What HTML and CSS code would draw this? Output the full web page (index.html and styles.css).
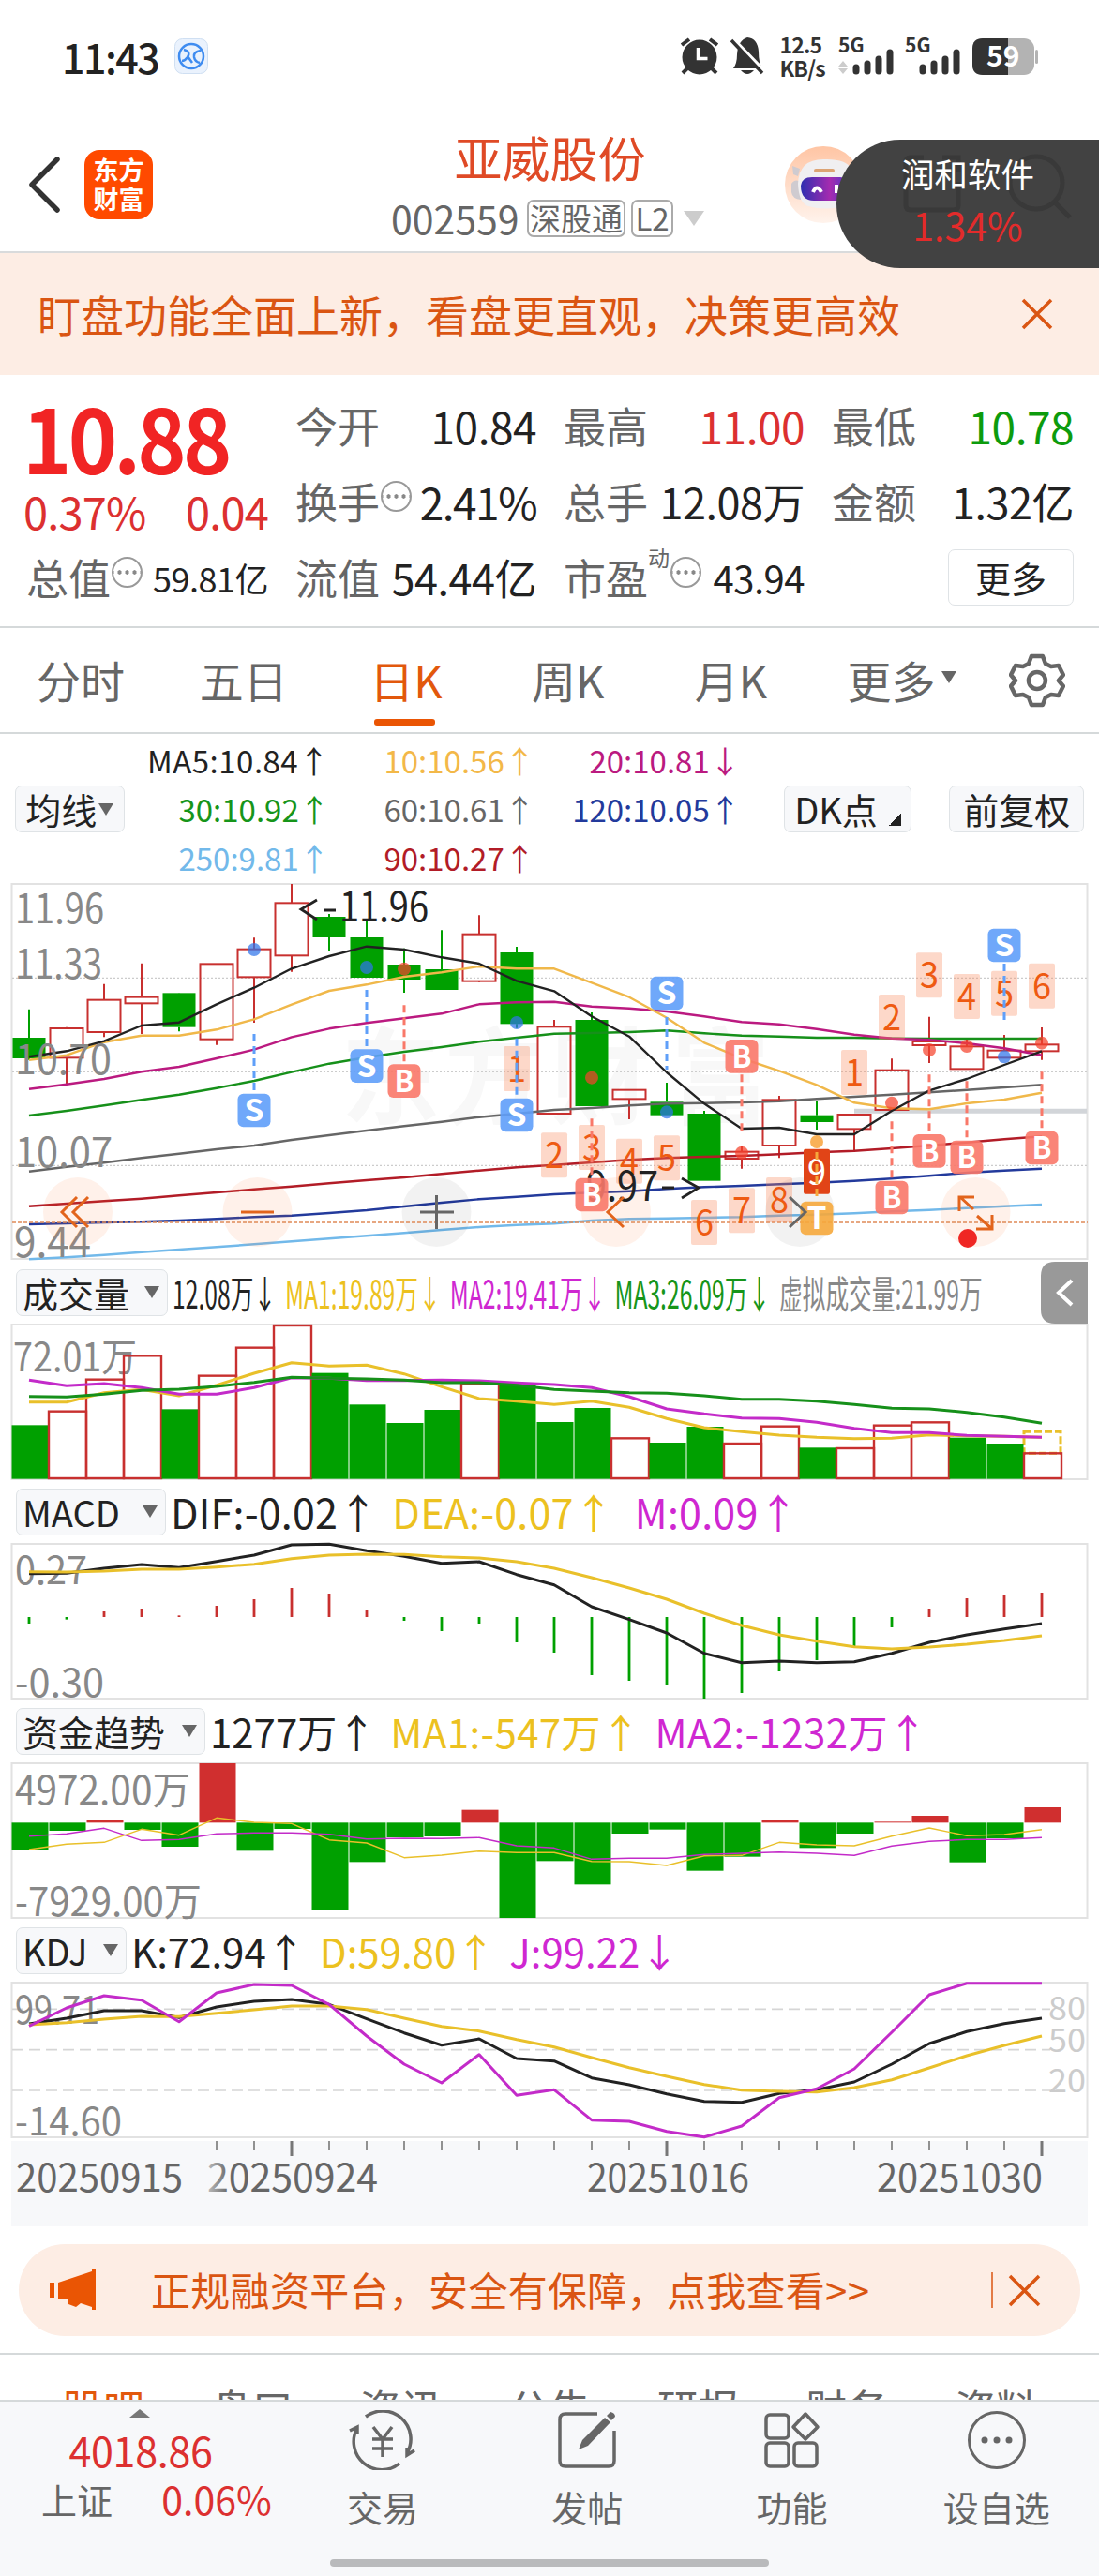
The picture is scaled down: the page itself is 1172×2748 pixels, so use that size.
FILE: index.html
```html
<!DOCTYPE html>
<html lang="zh-CN">
<head>
  <meta charset="UTF-8" />
  <meta name="viewport" content="width=device-width, initial-scale=1.0"/>
  <title>亚威股份 002559</title>
  <link rel="stylesheet" href="styles.css">
</head>
<body>
  <div class="status">
    <span class="clock">11:43</span>
    <svg class="app" width="36" height="38" viewBox="0 0 36 38"><rect x=".5" y=".5" width="35" height="37" rx="8" fill="#eaf2fd" stroke="#cfdff2"/><circle cx="18" cy="19" r="13" fill="none" stroke="#3f8cf0" stroke-width="2.5"/><path d="M10 12q8 2 4 8-3 4-6 4M28 13q-8 1-7 7 1 5 6 6M14 19l5 7" fill="none" stroke="#3f8cf0" stroke-width="2.5"/></svg>
    <svg class="alarm" width="42" height="40" viewBox="0 0 42 40"><circle cx="21" cy="21" r="18.500" fill="#333"/><path d="M19.500 11v11.500h10" fill="none" stroke="#fff" stroke-width="3.5"/><path d="M2 8l8-6M40 8l-8-6M8 33l-5 5M34 33l5 5" stroke="#333" stroke-width="4"/></svg>
    <svg class="bell" width="36" height="40" viewBox="0 0 36 40"><path d="M3 33q4-5 4-15Q8 3 18 0q11 1 12 15 0 12 4 18zM11 35h14q-7 8-14 0z" fill="#333"/><path d="M4 3l33 34" stroke="#fff" stroke-width="4"/><path d="M1 3l33 35" stroke="#333" stroke-width="3.5"/></svg>
    <span class="speed">12.5<br>KB/s</span>
    <svg class="signal" width="60" height="40" viewBox="0 0 60 40"><text x="0" y="16" class="g5">5G</text><path d="M0 31l5-6 5 6zM0 33l5 6 5-6z" fill="#ccc"/><path d="M19 32v4M31 28v8M43 23v13M55 16v20" stroke="#333" stroke-width="7" stroke-linecap="round"/></svg>
    <svg class="signal" width="60" height="40" viewBox="0 0 60 40"><text x="0" y="16" class="g5">5G</text><path d="M19 32v4M31 28v8M43 23v13M55 16v20" stroke="#333" stroke-width="7" stroke-linecap="round"/></svg>
    <svg class="battery" width="70" height="39" viewBox="0 0 70 39"><rect width="66" height="39" rx="11" fill="#b3b3b3"/><path d="M38 0H11Q0 0 0 11v17q0 11 11 11h27z" fill="#333"/><rect x="67" y="12" width="3" height="15" rx="1.5" fill="#b3b3b3"/><text x="15" y="30">59</text></svg>
  </div>

  <header class="header">
    <svg class="back" width="34" height="60" viewBox="0 0 34 60"><path d="M31 3L4 30l27 27" fill="none" stroke="#333" stroke-width="5.5" stroke-linecap="round" stroke-linejoin="round"/></svg>
    <div class="brand">东方<br>财富</div>
    <div class="stock">
      <h1>亚威股份</h1>
      <div class="code"><span>002559</span><i>深股通</i><i class="l2">L2</i><b class="down"></b></div>
    </div>
    <svg class="robot" width="84" height="84" viewBox="0 0 84 84">
      <defs>
        <linearGradient id="halo" x1="0" y1="0" x2="0" y2="1"><stop offset="0" stop-color="#ffc5a4"/><stop offset="1" stop-color="#fff3ec"/></linearGradient>
        <linearGradient id="face"><stop offset="0" stop-color="#2e2fb0"/><stop offset=".6" stop-color="#a52bb0"/><stop offset="1" stop-color="#4a37c8"/></linearGradient>
      </defs>
      <circle cx="42" cy="41" r="41" fill="url(#halo)"/>
      <path d="M9 21l8 3-2 8-5-2zM8 40q3-5 8-3l2 20q-9-1-10-8z" fill="#cfcbd0"/>
      <path d="M15 40q1-26 27-26 24-1 30 10v38q-26 8-46 2-10-3-11-24z" fill="#f0eff1"/>
      <path d="M18 42q1-9 12-9h30q10 0 10 10v15H32Q18 58 18 42z" fill="url(#face)"/>
      <path d="M31 49q4-9 9 0M56 41v9" fill="none" stroke="#fff" stroke-width="4"/>
      <path d="M34 26h18" stroke="#dca373" stroke-width="4" stroke-linecap="round"/>
    </svg>
    <div class="float">
      <svg width="190" height="80" viewBox="0 0 190 80"><g fill="none" stroke="#393939" stroke-width="5"><path d="M24 4H10Q5 4 5 9v46q0 5 5 5h46q5 0 5-5V30M44 4h17v16"/><circle cx="144" cy="31" r="28"/><path d="M164 52l16 16"/></g></svg>
      <span>润和软件</span>
      <strong>1.34%</strong>
    </div>
  </header>

  <div class="notice">
    <span>盯盘功能全面上新，看盘更直观，决策更高效</span>
    <svg width="34" height="34" viewBox="0 0 34 34"><path d="M2 2l30 30M32 2L2 32" stroke="#da5512" stroke-width="3.5"/></svg>
  </div>

  <section class="quote">
    <div class="now">
      <div class="price">10.88</div>
      <div class="change"><span>0.37%</span><span>0.04</span></div>
    </div>
    <div class="cell"><label>今开</label><span>10.84</span></div>
    <div class="cell"><label>最高</label><span class="up">11.00</span></div>
    <div class="cell"><label>最低</label><span class="green">10.78</span></div>
    <div class="cell"><label>换手<i class="dots"></i></label><span class="rate">2.41%</span></div>
    <div class="cell"><label>总手</label><span class="tight">12.08万</span></div>
    <div class="cell"><label>金额</label><span class="tight">1.32亿</span></div>
    <div class="cell"><label>总值<i class="dots"></i></label><span class="small">59.81亿</span></div>
    <div class="cell"><label>流值</label><span class="tight">54.44亿</span></div>
    <div class="cell"><label>市盈<sup>动</sup><i class="dots"></i></label><span class="pe">43.94</span></div>
    <div class="cell end"><button>更多</button></div>
  </section>

  <nav class="tabs">
    <span>分时</span>
    <span>五日</span>
    <span class="active">日K</span>
    <span>周K</span>
    <span>月K</span>
    <span class="more">更多<b class="down dark"></b></span>
    <svg width="60" height="60" viewBox="0 0 60 60"><g fill="none" stroke="#666" stroke-width="4.5" stroke-linejoin="round"><path d="M24 4h12l3 8 6 3 8-1 5 10-5 6 5 6-5 10-8-1-6 3-3 8H24l-3-8-6-3-8 1-5-10 5-6-5-6 5-10 8 1 6-3z"/><circle cx="30" cy="30" r="9"/></g></svg>
  </nav>

  <div class="ma">
    <button class="pick">均线<b class="down dark"></b></button>
    <div class="ma-list">
      <span class="c5">MA5:10.84↑</span><span class="c10">10:10.56↑</span><span class="c20">20:10.81↓</span>
      <span class="c30">30:10.92↑</span><span class="c60">60:10.61↑</span><span class="c120">120:10.05↑</span>
      <span class="c250">250:9.81↑</span><span class="c90">90:10.27↑</span>
    </div>
    <button class="dk">DK点<b class="corner"></b></button>
    <button class="fq">前复权</button>
  </div>
  <svg class="chart" id="kline" width="1172" height="401"></svg>

  <div class="legend vol">
    <button>成交量<b class="down dark"></b></button>
    <div class="narrow"><span>12.08万↓</span><span class="y">MA1:19.89万↓</span><span class="m">MA2:19.41万↓</span><span class="g">MA3:26.09万↓</span><span class="n">虚拟成交量:21.99万</span></div>
    <svg class="fold" width="50" height="66" viewBox="0 0 50 66"><path d="M50 0H15Q0 0 0 15v36q0 15 15 15h35z" fill="#999"/><path d="M33 20L19 33l14 13" fill="none" stroke="#fff" stroke-width="4"/></svg>
  </div>
  <svg class="chart" id="volume" width="1172" height="165"></svg>

  <div class="legend macd">
    <button>MACD<b class="down dark"></b></button>
    <span>DIF:-0.02↑</span><span class="y">DEA:-0.07↑</span><span class="m">M:0.09↑</span>
  </div>
  <svg class="chart" id="macd" width="1172" height="165"></svg>

  <div class="legend fund">
    <button>资金趋势<b class="down dark"></b></button>
    <span class="main">1277万↑</span><span class="y">MA1:-547万↑</span><span class="m">MA2:-1232万↑</span>
  </div>
  <svg class="chart" id="fund" width="1172" height="165"></svg>

  <div class="legend kdj">
    <button>KDJ<b class="down dark"></b></button>
    <span>K:72.94↑</span><span class="y">D:59.80↑</span><span class="m">J:99.22↓</span>
  </div>
  <svg class="chart" id="kdj" width="1172" height="165"></svg>
  <svg class="axis" id="axis" width="1148" height="91"></svg>

  <div class="promo">
    <svg width="50" height="44" viewBox="0 0 50 44"><path d="M0 14h5v16H0zM9 14L45 2V0h4v43h-4v-3l-12-4-5 4-8-3v-5H9z" fill="#ea5504"/></svg>
    <span>正规融资平台，安全有保障，点我查看&gt;&gt;</span>
    <svg class="close" width="54" height="38" viewBox="0 0 54 38"><path d="M1 0v38" stroke="#da5512" stroke-width="1.5"/><path d="M20 4l31 31M51 4L20 35" stroke="#da5512" stroke-width="3.5"/></svg>
  </div>

  <nav class="subtabs">
    <span class="active">股吧</span><span>盘口</span><span>资讯</span><span>公告</span><span>研报</span><span>财务</span><span>资料</span>
  </nav>

  <footer class="bottom">
    <div class="index">
      <b class="upmark"></b>
      <strong>4018.86</strong>
      <div><span>上证</span><em>0.06%</em></div>
    </div>
    <div class="action">
      <svg width="72" height="64" viewBox="0 0 72 64"><g fill="none" stroke="#666" stroke-width="3.5"><path d="M18 7A30 30 0 0 1 62 46M54 57A30 30 0 0 1 9 19M1 22l8-4v7M70 43l-8 5v-8M26 18l10 13 10-13M25 31h22M25 41h22M36 31v19"/></g></svg>
      <span>交易</span>
    </div>
    <div class="action">
      <svg width="64" height="64" viewBox="0 0 64 64"><path d="M43 4H9Q3 4 3 10v44q0 6 6 6h46q6 0 6-6V22" fill="none" stroke="#666" stroke-width="3.5"/><path d="M23 42l4-10L51 8l6 5-24 25zM53 6l4-4q5 1 5 5l-4 4z" fill="#666"/></svg>
      <span>发帖</span>
    </div>
    <div class="action">
      <svg width="62" height="64" viewBox="0 0 62 64"><g fill="none" stroke="#666" stroke-width="3.5"><rect x="3" y="5" width="24" height="25" rx="4"/><rect x="3" y="35" width="24" height="25" rx="4"/><rect x="33" y="35" width="24" height="25" rx="4"/><path d="M45 4l13 14-13 13-13-13z" stroke-linejoin="round"/></g></svg>
      <span>功能</span>
    </div>
    <div class="action">
      <svg width="64" height="64" viewBox="0 0 64 64"><circle cx="32" cy="32" r="29.500" fill="none" stroke="#666" stroke-width="3"/><g fill="#666"><circle cx="19" cy="32" r="3.5"/><circle cx="32" cy="32" r="3.5"/><circle cx="45" cy="32" r="3.5"/></g></svg>
      <span>设自选</span>
    </div>
    <div class="home"></div>
  </footer>

  <script src="charts.js"></script>
</body>
</html>
```
FILE: styles.css
```css
* {
  box-sizing: border-box;
}
body {
  margin: 0;
  width: 1172px;
  height: 2748px;
  overflow: hidden;
  display: flex;
  flex-direction: column;
  background: #fff;
  color: #222;
  font-family: "Noto Sans CJK SC", sans-serif;
  line-height: 1;
}
body > * {
  flex: none;
}
i, em {
  font-style: normal;
}
button {
  font-family: inherit;
  line-height: 1;
  color: #222;
  background: #f7f8fa;
  border: 1.5px solid #dfe3e6;
  border-radius: 7px;
  padding: 0;
  display: flex;
  align-items: center;
  justify-content: center;
}
.down {
  border: 11px solid transparent;
  border-top: 16px solid #ccc;
  border-bottom: 0;
}
.down.dark {
  border-width: 13px 8px 0;
  border-top-color: #666;
}

/* status bar */
.status {
  height: 120px;
  padding: 0 65px 0 66px;
  display: flex;
  align-items: center;
}
.status svg {
  overflow: visible;
}
.clock {
  font-size: 43px;
  font-weight: 500;
  width: 123px;
  letter-spacing: -1.5px;
}
.alarm {
  margin-left: 503px;
}
.bell {
  margin-left: 12px;
}
.speed {
  width: 64px;
  margin-left: 16px;
  font-size: 23px;
  line-height: 25px;
  font-weight: 700;
  color: #333;
  letter-spacing: -0.8px;
}
.signal {
  margin-right: 11px;
}
.g5 {
  font-size: 21px;
  font-weight: 700;
  fill: #333;
}
.battery {
  margin-left: 1px;
}
.battery text {
  font-size: 30px;
  font-weight: 700;
  fill: #fff;
}

/* title bar */
.header {
  position: relative;
  height: 150px;
  border-bottom: 2px solid #d9dbdc;
  padding-left: 30px;
  display: flex;
}
.back {
  margin-top: 47px;
}
.brand {
  margin: 40px 0 0 26px;
  width: 73px;
  height: 74px;
  border-radius: 16px;
  background: #ff4a00;
  color: #fff;
  font-size: 27px;
  font-weight: 700;
  line-height: 31px;
  padding-top: 5px;
  text-align: center;
}
.stock {
  margin-left: 254px;
  width: 419px;
  padding-top: 22px;
}
h1 {
  margin: 0;
  width: 339px;
  text-align: center;
  font-size: 51px;
  font-weight: 400;
  color: #df4a26;
}
.code {
  display: flex;
  align-items: center;
  margin-top: 19px;
  color: #666;
  font-size: 41px;
}
.code span {
  width: 145px;
}
.code i {
  height: 40px;
  width: 105px;
  border: 2px solid #aaa;
  border-radius: 7px;
  font-size: 33px;
  line-height: 35px;
  text-align: center;
}
.code .l2 {
  width: 45px;
  margin: 0 11px 0 6px;
}
.robot {
  margin-top: 36px;
}
.float {
  position: absolute;
  right: 0;
  top: 29px;
  z-index: 2;
  width: 280px;
  height: 137px;
  background: #424242;
  border-radius: 68px 0 0 68px;
  text-align: center;
  color: #fff;
}
.float svg {
  position: absolute;
  left: 69px;
  top: 15px;
}
.float span, .float strong {
  position: relative;
  display: block;
  font-size: 35.5px;
  margin-top: 18px;
}
.float strong {
  font-size: 41px;
  font-weight: 400;
  color: #e32b2b;
  margin-top: 16px;
}

.notice {
  height: 130px;
  padding: 0 49px 0 40px;
  background: #fdede4;
  color: #da5512;
  font-size: 46px;
  display: flex;
  align-items: center;
  justify-content: space-between;
}
.notice span {
  margin-top: -3px;
}

/* quote */
.quote {
  height: 270px;
  padding: 13px 27px 0 28px;
  border-bottom: 2px solid #d5d9da;
  display: grid;
  grid-template-columns: 258px 257px 257px 258px;
  grid-auto-rows: 81px;
  column-gap: 29px;
}
.now {
  grid-row: span 2;
  color: #f12424;
}
.price {
  font-size: 94px;
  font-weight: 700;
  letter-spacing: -4px;
  margin: 5px 0 0 -4px;
  transform: scaleX(.945);
  transform-origin: left;
}
.change {
  display: flex;
  justify-content: space-between;
  font-size: 47px;
  letter-spacing: -0.8px;
  color: #dc3030;
  margin: 9px 0 0 -3px;
}
.cell {
  display: flex;
  align-items: center;
  justify-content: space-between;
  font-size: 46px;
}
.cell label {
  color: #666;
  font-size: 45px;
  display: flex;
  align-items: center;
}
.cell span {
  letter-spacing: -0.5px;
}
.cell .rate {
  letter-spacing: -1.5px;
}
.cell .tight {
  font-size: 45px;
  letter-spacing: -0.5px;
}
.cell .small {
  font-size: 36px;
}
.cell .pe {
  font-size: 40px;
}
.up {
  color: #dc3030;
}
.green {
  color: #0d9b0d;
}
.dots {
  width: 33px;
  height: 33px;
  margin: -10px 0 0 1px;
  border: 2.5px solid #999;
  border-radius: 50%;
  background: radial-gradient(circle, #888 2px, transparent 2.5px) center / 8px 100% repeat-x;
}
.cell sup {
  font-size: 23px;
  margin: -42px 0 0;
}
.end {
  justify-content: flex-end;
}
.end button {
  width: 134px;
  height: 60px;
  font-size: 38px;
  background: #fff;
}

/* period tabs */
.tabs {
  height: 113px;
  border-bottom: 2px solid #d5d9da;
  padding: 0 36px 0 39px;
  display: flex;
  align-items: center;
  color: #666;
  font-size: 47px;
}
.tabs span {
  height: 68px;
  width: 174px;
  display: flex;
  padding-top: 9px;
}
.tabs span:nth-child(2) {
  width: 182px;
}
.tabs span:nth-child(3) {
  width: 173px;
}
.tabs .active {
  position: relative;
  color: #e2580c;
}
.tabs .active::after {
  content: "";
  position: absolute;
  left: 5px;
  bottom: -14px;
  width: 65px;
  height: 7px;
  border-radius: 3px;
  background: #ea5504;
}
.tabs span:nth-child(5) {
  width: 163px;
}
.tabs .more {
  width: 173px;
}
.more .down {
  margin: 15px 0 0 7px;
}

/* moving averages */
.ma {
  height: 160px;
  padding: 0 16px;
  display: flex;
  align-items: center;
}
.ma button {
  height: 50px;
  font-size: 38px;
}
.ma .pick {
  width: 117px;
  gap: 2px;
}
.ma-list {
  width: 657px;
  margin-right: 46px;
  display: grid;
  grid-template-columns: repeat(3, 219px);
  grid-auto-rows: 52px;
  align-items: center;
  text-align: right;
  font-size: 33px;
}
.ma .dk {
  width: 137px;
  margin-right: 40px;
  gap: 12px;
}
.corner {
  width: 13px;
  height: 13px;
  margin-top: 22px;
  background: linear-gradient(135deg, transparent 50%, #222 50%);
}
.ma .fq {
  width: 144px;
}
.c5 { letter-spacing: 0.5px; }
.c10 { color: #f3b848; }
.c20 { color: #bb1a80; }
.c30 { color: #16951a; }
.c60 { color: #666; }
.c120 { color: #233a9c; }
.c250 { color: #72b9ea; }
.c90 { color: #b21c27; }

/* indicator headers */
.legend {
  height: 69px;
  padding-left: 17px;
  display: flex;
  align-items: center;
  font-size: 42px;
  white-space: nowrap;
}
.legend button {
  height: 50px;
  font-size: 38px;
  padding: 0 8px 0 6px;
  justify-content: space-between;
  margin-right: 5px;
  flex: none;
}
.legend span {
  margin-right: 15px;
}
.vol button { width: 162px; }
.macd button { width: 160px; }
.fund button { width: 202px; }
.kdj button { width: 118px; }
.macd span {
  font-size: 43px;
  letter-spacing: 0.2px;
}
.macd .y {
  margin-right: 22px;
}
.fund .m, .fund .y {
  letter-spacing: 0.4px;
}
.legend .narrow {
  width: 926px;
  font-size: 41px;
  transform: scaleX(.602);
  transform-origin: left;
}
.fold {
  position: absolute;
  left: 1110px;
}
.y { color: #ecc11f; }
.m { color: #cf27d1; }
.g { color: #16951a; }
.n { color: #888; }

.chart {
  display: block;
  overflow: visible;
}
.chart text {
  fill: #888;
}
.chart .note {
  fill: #222;
}
.chart .badge {
  fill: #fff;
  font-weight: 700;
}
.chart .count {
  fill: #ee5a12;
}
.chart .nine {
  fill: #fff;
}
.chart .level {
  fill: #ccc;
}
.chart .mark {
  fill: #f8f8f8;
  font-weight: 700;
}
.axis {
  display: block;
  margin: 4px 12px 0;
  background: #f7f8fa;
}
.axis text {
  fill: #666;
}

.promo {
  height: 98px;
  margin: 19px 20px 0;
  padding: 0 41px 0 33px;
  border-radius: 49px;
  background: #fdede4;
  color: #da5512;
  font-size: 42px;
  display: flex;
  align-items: center;
}
.promo span {
  margin: -3px 0 0 58px;
  letter-spacing: 0.3px;
}
.promo .close {
  margin-left: auto;
}

.subtabs {
  height: 50px;
  margin-top: 18px;
  padding: 34px 66px 0;
  border-top: 2px solid #d5d9da;
  display: flex;
  justify-content: space-between;
  overflow: hidden;
  font-size: 44px;
  color: #666;
}
.subtabs .active {
  color: #e2580c;
}

/* bottom bar */
.bottom {
  position: relative;
  height: 188px;
  background: #f7f8fa;
  border-top: 2px solid #d5d9da;
  padding-left: 30px;
  display: flex;
}
.index {
  width: 269px;
  color: #dc3030;
}
.upmark {
  display: block;
  width: 0;
  margin: 8px 0 0 108px;
  border: 11px solid transparent;
  border-top: 0;
  border-bottom: 9px solid #777;
}
.index strong {
  display: block;
  width: 240px;
  text-align: center;
  font-size: 43px;
  font-weight: 400;
  letter-spacing: -0.3px;
  margin: 13px 0 10px;
}
.index div {
  display: flex;
  justify-content: space-between;
  align-items: center;
  padding: 0 9px 0 14px;
  font-size: 41px;
}
.index div span {
  font-size: 38px;
  color: #666;
}
.action {
  width: 218.5px;
  padding-top: 9px;
  display: flex;
  flex-direction: column;
  align-items: center;
  color: #666;
  font-size: 38px;
}
.action span {
  margin-top: 20px;
}
.home {
  position: absolute;
  left: 352px;
  bottom: 10px;
  width: 468px;
  height: 8px;
  border-radius: 4px;
  background: #b9babc;
}
```
FILE: charts.js
```js
const RED = "#c8302f";
const GREEN = "#00a000";
const BLACK = "#222";
const YELLOW = "#e9c02a";
const PURPLE = "#c32bc9";

// one trading day every 40px
const cx = i => 31 + i * 40;

// values are in thirds of a pixel, counted from `top`
function makeChart(id, top) {
  const y = v => (v - top) / 3;
  let out = "";
  return {
    y,
    add(s) { out += s; },
    rect(x, a, w, b, attrs) {
      out += `<rect x="${x}" y="${y(a)}" width="${w}" height="${Math.max(y(b) - y(a), 1)}" ${attrs}/>`;
    },
    line(values, color, width) {
      const pts = values.map((v, i) => `${cx(i)},${y(v).toFixed(1)}`).join(" ");
      out += `<polyline points="${pts}" fill="none" stroke="${color}" stroke-width="${width}" stroke-linejoin="round"/>`;
    },
    text(s, x, base, size, width, cls) {
      out += `<text x="${x}" y="${base}" font-size="${size}" textLength="${width}" lengthAdjust="spacingAndGlyphs" class="${cls || ""}">${s}</text>`;
    },
    done() { document.getElementById(id).innerHTML = out; }
  };
}
const frame = h => `<rect x="12.5" y="0" width="1147" height="${h}" fill="none" stroke="#e2e2e2" stroke-width="2"/>`;

// ---- candles ----
const k = makeChart("kline", 42);
k.add(frame(400));
"东方财富".split("").forEach((c, i) => k.text(c, [364, 474, 588, 716][i], 248, 112, 105, "mark"));
[343, 643, 943].forEach(v => k.add(`<path d="M13 ${k.y(v)}H1159" stroke="#ccc" stroke-width="1.2" stroke-dasharray="2 2"/>`));
k.add(`<path d="M911 ${k.y(769)}H1159" stroke="#d2d5d9" stroke-width="5"/>`);

// high, top, bottom, low
const candles = [
  ["g", 443, 534, 600, 605], ["r", 500, 504, 598, 683], ["r", 362, 413, 516, 532], ["r", 296, 404, 424, 522],
  ["g", 390, 391, 500, 514], ["r", 298, 298, 539, 557], ["r", 214, 251, 340, 486], ["r", 42, 103, 271, 323],
  ["g", 138, 147, 213, 256], ["g", 155, 213, 342, 342], ["g", 248, 300, 348, 390], ["g", 190, 315, 381, 381],
  ["r", 142, 203, 353, 356], ["g", 243, 261, 490, 503], ["r", 477, 499, 777, 777], ["g", 453, 477, 753, 753],
  ["r", 700, 701, 730, 795], ["g", 678, 739, 782, 782], ["g", 768, 777, 992, 992], ["r", 880, 899, 921, 953],
  ["r", 720, 733, 879, 919], ["g", 738, 782, 804, 828], ["r", 778, 780, 826, 900], ["r", 601, 638, 765, 765],
  ["r", 467, 546, 558, 615], ["r", 540, 562, 634, 634], ["r", 525, 575, 598, 598], ["r", 501, 556, 577, 605]
];
candles.forEach(([c, hi, top, bot, lo], i) => {
  const color = c === "g" ? GREEN : RED;
  k.add(`<path d="M${cx(i)} ${k.y(hi)}V${k.y(top)}M${cx(i)} ${k.y(bot)}V${k.y(lo)}" stroke="${color}" stroke-width="2"/>`);
  k.rect(cx(i) - 17.5, top, 35, bot, c === "g" ? `fill="${GREEN}"` : `fill="none" stroke="${RED}" stroke-width="2"`);
});

k.line([1243,1237,1229,1220,1212,1204,1195,1186,1177,1168,1159,1149,1140,1133,1129,1119,1114,1112,1110,1108,1103,1100,1096,1090,1085,1079,1073,1068], "#72b9ea", 2.4);
k.line([1131,1128,1125,1123,1119,1114,1108,1103,1095,1086,1074,1062,1051,1043,1035,1030,1025,1018,1012,1008,1003,998,992,985,976,966,959,953], "#233a9c", 2.4);
k.line([1073,1065,1057,1049,1039,1029,1019,1010,1000,990,981,970,959,949,941,933,925,919,915,912,907,901,896,888,879,869,859,850], "#b21c27", 2.4);
k.line([962,947,934,919,905,891,879,861,846,831,817,803,788,777,765,759,751,745,743,741,737,730,723,716,709,701,693,685], "#666", 2.4);
k.line([783,768,751,733,716,695,672,644,617,597,579,564,547,534,521,519,516,511,520,527,530,534,534,536,537,537,537,537], "#16901a", 2.4);
k.line([698,683,666,643,627,600,572,532,505,487,472,457,427,421,419,434,440,450,466,484,491,506,524,536,541,552,568,590], "#bb1a80", 2.4);
k.line([605,590,548,527,527,508,475,428,384,364,339,325,306,313,313,358,404,470,550,600,640,685,742,760,763,744,732,710], "#f0b84a", 2.4);
k.line([595,577,545,495,485,427,374,313,273,242,252,277,297,352,385,466,530,645,745,825,822,843,843,768,703,666,621,577], BLACK, 2.4);

// scale labels
k.text("11.96", 16, 42, 43, 95);
k.text("11.33", 16, 101, 43, 93);
k.text("10.70", 16, 203, 43, 103);
k.text("10.07", 16, 302, 43, 104);
k.text("9.44", 15, 398, 43, 82);

// tool buttons under the candles
[83, 274.5, 465.5, 657, 853, 1040.5].forEach((x, i) => {
  const gray = i === 2 || i === 4;
  k.add(`<circle cx="${x}" cy="350" r="37" fill="${gray ? "#000" : "#ff7a30"}" fill-opacity="${gray ? .05 : .1}"/>`);
});
k.add(`<path d="M13 361H1160" stroke="#e08a58" stroke-width="1.6" stroke-dasharray="4 2"/>`);

// count boxes: day, label, top
[[13, 1, 561], [14, 2, 838], [15, 3, 813], [16, 4, 857], [17, 5, 847], [18, 6, 1053], [19, 7, 1015], [20, 8, 981],
 [21, 9, 890], [22, 1, 573], [23, 2, 396], [24, 3, 262], [25, 4, 330], [26, 5, 320], [27, 6, 296]].forEach(([i, n, top]) => {
  const nine = n === 9;
  k.rect(cx(i) - 14, top, 28, top + 144, `rx="2" fill="${nine ? "#e14417" : "#f98a5c"}" fill-opacity="${nine ? 1 : .33}"`);
  k.text(n, cx(i) - 10, k.y(top) + 38, 38, 20, nine ? "nine" : "count");
});

// low price callout
k.text("9.97", 625, 338, 43, 77, "note");
k.add(`<path d="M706 324h13M727 314l18 10-18 11" fill="none" stroke="#222" stroke-width="2.8"/>`);

// buy / sell signals: day, letter, badge top, dash from, dash to, dot
[[6, "S", 713, 522, 708, 252], [9, "S", 571, 381, 567, 309], [10, "B", 619, 430, 615, 314], [13, "S", 728, 536, 722, 486],
 [15, "B", 983, 793, 978, 662], [17, "S", 338, 468, 636, 772], [19, "B", 540, 652, 835, 902], [21, "T", 1058, 900, 1052, 867],
 [23, "B", 992, 802, 988, 743], [24, "B", 843, 652, 838, 573], [25, "B", 863, 673, 858, 561], [26, "S", 185, 297, 484, 595],
 [27, "B", 833, 643, 828, 551]].forEach(([i, s, top, a, b, dot]) => {
  const color = { S: "#5f9ff9", B: "#f97869", T: "#f6a83c" }[s];
  const dotColor = { S: "#2f74ea", B: "#f5432c", T: "#f79318" }[s];
  k.add(`<path d="M${cx(i)} ${k.y(a)}V${k.y(b)}" stroke="${color}" stroke-width="3" stroke-dasharray="8 5"/>`);
  k.add(`<circle cx="${cx(i)}" cy="${k.y(dot)}" r="7" fill="${dotColor}" fill-opacity=".72"/>`);
  k.rect(cx(i) - 17.5, top, 35, top + 107, `rx="6" fill="${color}" fill-opacity=".9"`);
  k.text(s, cx(i) - 10.5, k.y(top) + 29.5, 32, 21, "badge");
});

// high price callout
k.text("11.96", 362, 40, 43, 95, "note");
k.add(`<path d="M338 17l-17 10 17 11M345 28h13" fill="none" stroke="#222" stroke-width="2.8"/>`);

k.add(`<g fill="none" stroke="#e2641c" stroke-width="3">
  <path d="M82 334L66 350l16 16M94 334L78 350l16 16M257 350h35M665 334l-17 16 17 16"/>
  <path d="M1038 347l-14-13M1023 349v-15h16M1042 354l16 14M1058 353v15h-17"/>
</g>
<path d="M448 350h36M465.500 332v36M842 334l17 16-17 16" fill="none" stroke="#666" stroke-width="3"/>
<circle cx="1032" cy="378" r="10" fill="#ef2724"/>`);
k.done();

// ---- volume ----
const v = makeChart("volume", 219);
v.add(frame(165));
v.text("72.01万", 14, 50, 42, 132);
const vols = [541, 497, 395, 319, 490, 383, 293, 222, 374, 475, 534, 492, 408, 409, 531, 486, 583, 597, 546, 600, 545, 613, 615, 542, 532, 581, 600, 631];
const volUp = [1, 2, 3, 5, 6, 7, 12, 16, 19, 20, 22, 23, 24, 27];
v.rect(1092, 562, 39, 631, `fill="none" stroke="${YELLOW}" stroke-width="3" stroke-dasharray="8 3"`);
vols.forEach((t, i) => {
  if (volUp.includes(i)) v.rect(cx(i) - 19, t, 40, 711, `fill="none" stroke="${RED}" stroke-width="2.4"`);
  else v.rect(cx(i) - 18.5, t, 39, 713, `fill="${GREEN}"`);
});
v.line([467,467,437,427,447,413,375,341,352,349,377,418,456,464,475,464,484,520,549,562,573,580,584,583,572,575,577,580], YELLOW, 3);
v.line([397,415,408,421,442,442,421,389,391,398,398,397,399,406,411,421,450,489,505,518,520,532,551,565,565,574,577,580], PURPLE, 3);
v.line([449,451,442,430,426,417,404,388,391,393,397,405,405,413,427,432,437,439,447,458,458,464,475,487,489,500,515,535], "#16901a", 3);
v.done();

// ---- MACD ----
const m = makeChart("macd", 201);
m.add(frame(165));
m.text("0.27", 16, 43, 41, 77);
m.text("-0.30", 16, 163, 41, 95);
[456, 443, 417, 408, 430, 399, 378, 342, 360, 411, 447, 480, 456, 516, 549, 621, 639, 654, 696, 678, 609, 573, 534, 468, 408, 375, 363, 357].forEach((t, i) => {
  m.add(`<path d="M${cx(i)} ${m.y(435)}V${m.y(t)}" stroke="${t > 435 ? GREEN : RED}" stroke-width="2.8"/>`);
});
m.line([296,295,279,267,277,257,237,204,202,223,241,263,258,299,332,402,443,486,551,581,576,581,578,551,516,492,473,456], BLACK, 3);
m.line([290,291,288,282,282,275,266,248,237,234,235,242,246,258,279,309,342,378,423,462,492,512,530,537,531,522,510,495], YELLOW, 3);
m.done();

// ---- fund flow ----
const f = makeChart("fund", 183);
f.add(frame(165));
f.text("4972.00万", 16, 44, 42, 187);
f.text("-7929.00万", 16, 163, 42, 199);
[459, 399, 366, 396, 450, 183, 463, 393, 654, 499, 420, 417, 332, 678, 496, 571, 408, 395, 527, 482, 366, 454, 408, 370, 351, 500, 423, 324].forEach((t, i) => {
  const up = t < 373;
  f.rect(cx(i) - 18.5, up ? t : 373, 39, up ? 373 : t, `fill="${up ? "#d02f2f" : GREEN}"`);
});
f.line([459,442,436,394,413,358,372,376,428,438,485,477,464,469,469,497,498,510,479,478,436,444,447,416,390,415,411,395], YELLOW, 1.4);
f.line([416,409,391,430,427,409,406,406,410,425,423,424,421,447,454,490,487,487,475,471,467,471,478,448,433,427,427,421], PURPLE, 1.4);
f.done();

// ---- KDJ ----
const j = makeChart("kdj", 165);
j.add(frame(165));
[250, 380, 510].forEach(t => j.add(`<path d="M13 ${j.y(t)}H1120" stroke="#d6d6d6" stroke-width="1.6" stroke-dasharray="12 6"/>`));
j.text("99.71", 16, 44, 41, 90);
j.text("-14.60", 16, 163, 41, 114);
j.text("80", 1118, 40, 34, 40, "level");
j.text("50", 1118, 74, 34, 40, "level");
j.text("20", 1118, 117, 34, 40, "level");
j.line([297,279,255,255,277,243,225,219,235,281,326,365,345,408,416,470,492,521,545,548,520,508,483,426,360,322,296,279], BLACK, 3);
j.line([300,293,282,273,274,263,252,240,240,251,279,305,320,347,371,405,437,465,491,509,513,515,501,476,438,399,366,336], YELLOW, 3);
j.line([304,246,207,221,290,198,171,174,235,336,426,486,395,526,508,605,609,641,659,624,533,505,441,324,204,167,167,167], PURPLE, 3);
j.done();

// ---- dates ----
const a = makeChart("axis", 0);
for (let i = 5; i < 28; i++) {
  const major = i % 10 === 7;
  a.add(`<path d="M${cx(i) - 12} 0v${major ? 16 : 10}" stroke="#777" stroke-width="${major ? 3 : 1.6}"/>`);
}
a.text("20250915", 5, 54, 41, 178);
a.add(`<linearGradient id="fade"><stop offset="0" stop-color="#bbb"/><stop offset=".13" stop-color="#666"/></linearGradient>`);
a.add(`<text x="209" y="54" font-size="41" textLength="182" lengthAdjust="spacingAndGlyphs" style="fill:url(#fade)">20250924</text>`);
a.text("20251016", 614, 54, 41, 173);
a.text("20251030", 923, 54, 41, 177);
a.done();
```
